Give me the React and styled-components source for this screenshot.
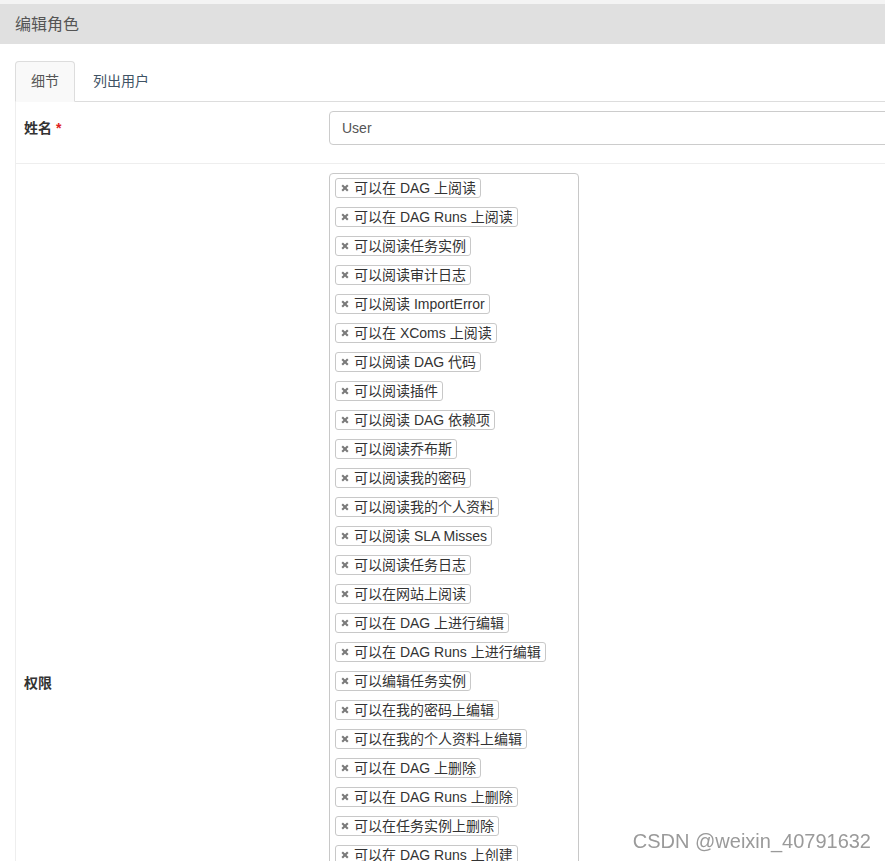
import React from "react";
import styled, { createGlobalStyle } from "styled-components";

const GlobalStyle = createGlobalStyle`
  html, body {
    margin: 0;
    padding: 0;
    overflow: hidden;
    background: #fff;
  }
  body {
    font-family: "Liberation Sans", "Noto Sans CJK SC", sans-serif;
    color: #333;
  }
`;

const permissions = [
  "可以在 DAG 上阅读",
  "可以在 DAG Runs 上阅读",
  "可以阅读任务实例",
  "可以阅读审计日志",
  "可以阅读 ImportError",
  "可以在 XComs 上阅读",
  "可以阅读 DAG 代码",
  "可以阅读插件",
  "可以阅读 DAG 依赖项",
  "可以阅读乔布斯",
  "可以阅读我的密码",
  "可以阅读我的个人资料",
  "可以阅读 SLA Misses",
  "可以阅读任务日志",
  "可以在网站上阅读",
  "可以在 DAG 上进行编辑",
  "可以在 DAG Runs 上进行编辑",
  "可以编辑任务实例",
  "可以在我的密码上编辑",
  "可以在我的个人资料上编辑",
  "可以在 DAG 上删除",
  "可以在 DAG Runs 上删除",
  "可以在任务实例上删除",
  "可以在 DAG Runs 上创建",
  "可以在任务实例上创建",
  "浏览器上的菜单访问",
  "DAG 依赖项上的菜单访问",
  "DAG Runs 上的菜单访问",
  "文档上的菜单访问",
  "工作上的菜单访问",
  "审计日志上的菜单访问",
  "插件上的菜单访问",
  "SLA Misses 上的菜单访问",
  "任务实例上的菜单访问",
  "任务重新调度上的菜单访问",
];

function Close() {
  return (
    <svg width="8" height="8" viewBox="0 0 8 8">
      <path d="M1.2 1.2 L6.8 6.8 M6.8 1.2 L1.2 6.8" stroke="#7a7a7a" strokeWidth="2.1" />
    </svg>
  );
}

function App() {
  return (
    <>
      <GlobalStyle />
      <TopStrip />
      <PageHeader>编辑角色</PageHeader>
      <Main>
        <Tabs>
          <Tab active>细节</Tab>
          <Tab>列出用户</Tab>
        </Tabs>
        <Table>
          <Row>
            <LabelCell top>
              姓名 <Required>*</Required>
            </LabelCell>
            <ValueCell>
              <Input>User</Input>
            </ValueCell>
          </Row>
          <Row tall>
            <LabelCell>权限</LabelCell>
            <ValueCell>
              <MultiBox>
                {permissions.map((p, i) => (
                  <TagItem key={i}>
                    <CloseIcon>
                      <Close />
                    </CloseIcon>
                    {p}
                  </TagItem>
                ))}
              </MultiBox>
            </ValueCell>
          </Row>
        </Table>
      </Main>
      <Watermark>CSDN @weixin_40791632</Watermark>
    </>
  );
}

const TopStrip = styled.div`
  height: 4px;
  background: #f4f4f4;
`;

const PageHeader = styled.div`
  height: 40px;
  line-height: 42px;
  background: #e0e0e0;
  padding-left: 15px;
  font-size: 16px;
  color: #555;
`;

const Main = styled.div`
  width: 1200px;
  padding: 17px 0 0 15px;
`;

const Tabs = styled.div`
  display: flex;
  height: 40px;
  border-bottom: 1px solid #ddd;
`;

const Tab = styled.div`
  margin-right: 2px;
  margin-bottom: -1px;
  padding: 0 15px;
  line-height: 38px;
  font-size: 14px;
  border: 1px solid ${(p) => (p.active ? "#ddd" : "transparent")};
  border-bottom-color: transparent;
  border-radius: 4px 4px 0 0;
  background: ${(p) => (p.active ? "#f9f9f9" : "transparent")};
  color: ${(p) => (p.active ? "#555" : "#3f5365")};
`;

const Table = styled.div`
  border-left: 1px solid #eee;
`;

const Row = styled.div`
  display: grid;
  grid-template-columns: 305px 1fr;
  border-bottom: 1px solid #eee;
  min-height: ${(p) => (p.tall ? "auto" : "61px")};
`;

const LabelCell = styled.div`
  display: flex;
  align-items: ${(p) => (p.top ? "flex-start" : "center")};
  padding: 9px 8px;
  line-height: 34px;
  font-size: 14px;
  font-weight: bold;
  color: #333;
`;

const Required = styled.span`
  color: #e02020;
  margin-left: 4px;
`;

const ValueCell = styled.div`
  padding: 9px 8px 8px;
`;

const Input = styled.div`
  height: 32px;
  line-height: 32px;
  padding: 0 12px;
  border: 1px solid #ccc;
  border-radius: 4px;
  font-size: 14px;
  color: #555;
`;

const MultiBox = styled.div`
  width: 236px;
  padding: 4px 7px 8px 5px;
  border: 1px solid #c8c8c8;
  border-radius: 4px;
  display: flex;
  flex-direction: column;
  align-items: flex-start;
  gap: 9px;
`;

const TagItem = styled.div`
  position: relative;
  height: 18px;
  line-height: 18px;
  padding: 0 4px 0 18px;
  border: 1px solid #c8c8c8;
  border-radius: 3px;
  background: #fff;
  font-size: 14px;
  color: #333;
  white-space: nowrap;
`;

const CloseIcon = styled.span`
  position: absolute;
  left: 5px;
  top: 5px;
  display: flex;
`;

const Watermark = styled.div`
  position: fixed;
  right: 14px;
  bottom: 8px;
  font-size: 20px;
  color: #9a9a9a;
  text-shadow: 0 0 2px #fff, 0 0 2px #fff;
  pointer-events: none;
`;

export default App;
